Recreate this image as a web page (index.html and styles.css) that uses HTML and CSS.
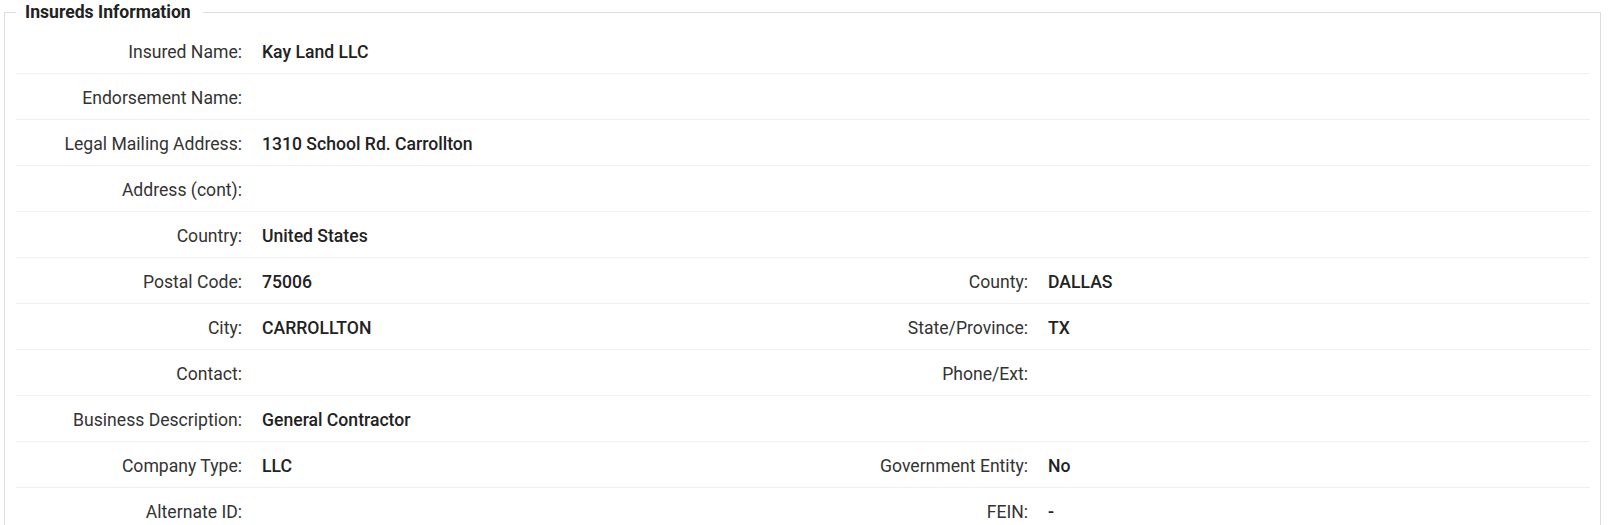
FILE: index.html
```html
<!DOCTYPE html>
<html lang="en">
<head>
<meta charset="utf-8">
<title>Insureds Information</title>
<link rel="stylesheet" href="styles.css">
</head>
<body>
<fieldset class="panel">
  <legend class="panel-title">Insureds Information</legend>
  <div class="rows">
    <div class="row"><span class="label">Insured Name:</span><span class="value">Kay Land LLC</span></div>
    <div class="row"><span class="label">Endorsement Name:</span><span class="value"></span></div>
    <div class="row"><span class="label">Legal Mailing Address:</span><span class="value">1310 School Rd. Carrollton</span></div>
    <div class="row"><span class="label">Address (cont):</span><span class="value"></span></div>
    <div class="row"><span class="label">Country:</span><span class="value">United States</span></div>
    <div class="row"><span class="label">Postal Code:</span><span class="value">75006</span><span class="label">County:</span><span class="value">DALLAS</span></div>
    <div class="row"><span class="label">City:</span><span class="value">CARROLLTON</span><span class="label">State/Province:</span><span class="value">TX</span></div>
    <div class="row"><span class="label">Contact:</span><span class="value"></span><span class="label">Phone/Ext:</span><span class="value"></span></div>
    <div class="row"><span class="label">Business Description:</span><span class="value">General Contractor</span></div>
    <div class="row"><span class="label">Company Type:</span><span class="value">LLC</span><span class="label">Government Entity:</span><span class="value">No</span></div>
    <div class="row"><span class="label">Alternate ID:</span><span class="value"></span><span class="label">FEIN:</span><span class="value">-</span></div>
  </div>
</fieldset>
</body>
</html>
```

FILE: styles.css
```css
html, body {
  margin: 0;
  padding: 0;
  background: #ffffff;
}

body {
  font-family: Roboto, "Liberation Sans", sans-serif;
  font-size: 17.6px;
  color: #333333;
}

.panel {
  margin: 0 12px 0 4px;
  padding: 3px 10px 0 11px;
  border: 1px solid #dddddd;
  min-width: 0;
}

.panel-title {
  padding: 0 12px 0 9px;
  font-weight: 700;
  font-size: 17.6px;
  line-height: 25px;
  color: #222222;
}

.rows {
  display: flex;
  flex-direction: column;
}

.row {
  display: grid;
  grid-template-columns: 226px 520px 226px 1fr;
  column-gap: 20px;
  align-items: center;
  height: 45px;
  border-bottom: 1px solid #f0f0f0;
  line-height: 22px;
}

.label {
  text-align: right;
  color: #333333;
  font-weight: 400;
  padding-top: 2px;
}

.value {
  color: #222222;
  font-weight: 500;
  padding-top: 2px;
}
```
